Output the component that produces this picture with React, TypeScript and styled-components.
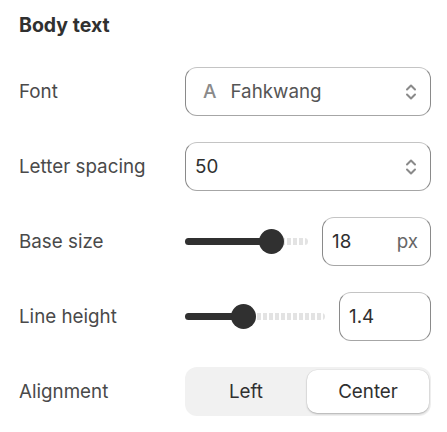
import React from "react";
import styled, { createGlobalStyle } from "styled-components";

const Global = createGlobalStyle`
  html, body { margin: 0; padding: 0; background: #ffffff; }
  body { font-family: Inter, "Noto Sans", "Liberation Sans", sans-serif; color: #303030; }
`;

const Panel = styled.div`
  width: 447px;
  box-sizing: border-box;
  padding: 11px 16px 0 19px;
  display: flex;
  flex-direction: column;
`;

const Heading = styled.h2`
  margin: 0;
  font-size: 19.5px;
  font-weight: 650;
  line-height: 28px;
  color: #303030;
  height: 28px;
`;

const Rows = styled.div`
  display: flex;
  flex-direction: column;
  gap: 26px;
  margin-top: 28px;
`;

const Row = styled.div`
  display: grid;
  grid-template-columns: 166px 246px;
  align-items: center;
  height: 49px;
`;

const Label = styled.span`
  font-size: 18.8px;
  color: #4a4a4a;
  line-height: 24px;
`;

const Field = styled.div<{ $pl?: number }>`
  box-sizing: border-box;
  height: 49px;
  border: 1px solid #8a8a8a;
  border-top-color: #c4c4c4;
  border-bottom-color: #a6a6a6;
  border-radius: 12px;
  background: #fff;
  display: flex;
  align-items: center;
  padding: 0 12px 0 ${(p) => p.$pl ?? 9}px;
  font-size: 18.8px;
  color: #303030;
`;

const FieldText = styled.span<{ $muted?: boolean }>`
  flex: 1;
  color: ${(p) => (p.$muted ? "#555" : "#303030")};
`;

const FontGlyph = styled.span`
  margin-left: 8px;
  margin-right: 14px;
  font-size: 19px;
  color: #8a8a8a;
  font-weight: 500;
`;

const Suffix = styled.span`
  color: #666;
`;

const Chevrons = () => (
  <svg width="14" height="20" viewBox="0 0 14 20" fill="none" stroke="#8a8a8a" strokeWidth="2" strokeLinecap="round" strokeLinejoin="round">
    <path d="M3 7.5 L7 3.5 L11 7.5" />
    <path d="M3 12.5 L7 16.5 L11 12.5" />
  </svg>
);

const SliderLine = styled.div`
  display: flex;
  align-items: center;
  gap: 14px;
`;

const Track = styled.div`
  position: relative;
  flex: 1;
  height: 25px;
`;

const Rail = styled.div`
  position: absolute;
  left: 0;
  right: 0;
  top: 50%;
  height: 7px;
  margin-top: -3.5px;
  border-radius: 4px;
  background: repeating-linear-gradient(90deg, #e3e3e3 0 4px, transparent 4px 6px);
`;

const Fill = styled.div`
  position: absolute;
  left: 0;
  top: 50%;
  height: 7px;
  margin-top: -3.5px;
  border-radius: 4px;
  background: #303030;
`;

const Thumb = styled.div`
  position: absolute;
  top: 0;
  width: 25px;
  height: 25px;
  border-radius: 50%;
  background: #303030;
`;

const NumberBox = styled(Field)<{ $w: number }>`
  width: ${(p) => p.$w}px;
  flex: none;
`;

const Segmented = styled.div`
  box-sizing: border-box;
  height: 49px;
  border-radius: 12px;
  background: #f1f1f1;
  padding: 3px 2px 3px 0;
  display: grid;
  grid-template-columns: 1fr 1fr;
`;

const Segment = styled.div<{ $active?: boolean }>`
  display: flex;
  align-items: center;
  justify-content: center;
  font-size: 18.8px;
  color: #303030;
  border-radius: 10px;
  background: ${(p) => (p.$active ? "#fff" : "transparent")};
  box-shadow: ${(p) => (p.$active ? "0 1px 2px rgba(0,0,0,0.25), 0 0 0 0.5px rgba(0,0,0,0.06)" : "none")};
`;

const Slider = ({ pct }: { pct: number }) => (
  <Track>
    <Rail />
    <Fill style={{ width: `calc((100% - 25px) * ${pct} + 12px)` }} />
    <Thumb style={{ left: `calc((100% - 25px) * ${pct})` }} />
  </Track>
);

export default function App() {
  return (
    <>
      <Global />
      <Panel>
        <Heading>Body text</Heading>
        <Rows>
          <Row>
            <Label>Font</Label>
            <Field>
              <FontGlyph>A</FontGlyph>
              <FieldText $muted>Fahkwang</FieldText>
              <Chevrons />
            </Field>
          </Row>
          <Row>
            <Label>Letter spacing</Label>
            <Field>
              <FieldText>50</FieldText>
              <Chevrons />
            </Field>
          </Row>
          <Row>
            <Label>Base size</Label>
            <SliderLine>
              <Slider pct={0.75} />
              <NumberBox $w={109}>
                <FieldText>18</FieldText>
                <Suffix>px</Suffix>
              </NumberBox>
            </SliderLine>
          </Row>
          <Row>
            <Label>Line height</Label>
            <SliderLine>
              <Slider pct={0.4} />
              <NumberBox $w={92}>
                <FieldText>1.4</FieldText>
              </NumberBox>
            </SliderLine>
          </Row>
          <Row>
            <Label>Alignment</Label>
            <Segmented>
              <Segment>Left</Segment>
              <Segment $active>Center</Segment>
            </Segmented>
          </Row>
        </Rows>
      </Panel>
    </>
  );
}
